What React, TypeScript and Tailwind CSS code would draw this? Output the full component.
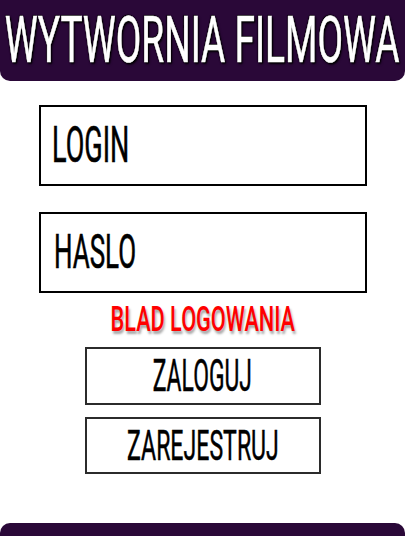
import React from 'react';

const font = "font-['Roboto','Liberation_Sans',Arial,sans-serif]";

const App: React.FC = () => {
  return (
    <div className={`w-[405px] h-[536px] overflow-hidden bg-white flex flex-col items-center ${font}`}>
      {/* Header */}
      <div className="w-full h-[81px] shrink-0 bg-[#2a0838] rounded-b-[10px] flex items-center justify-center">
        <span className="inline-block text-[64px] leading-none font-normal text-white scale-x-[0.58] whitespace-nowrap [-webkit-text-stroke:0.6px_white] [text-shadow:0_0_2px_#000,1px_1px_1px_#000,-1px_-1px_1px_#000,2px_2px_3px_#000]">
          WYTWORNIA FILMOWA
        </span>
      </div>

      {/* Inputs */}
      <div className="mt-[24px] w-[328px] h-[81px] border-2 border-black flex items-center px-[11px]">
        <span className="inline-block origin-left -mt-[2px] text-[50px] leading-none font-normal text-black scale-x-[0.54] [-webkit-text-stroke:0.6px_black]">LOGIN</span>
      </div>
      <div className="mt-[26px] w-[328px] h-[81px] border-2 border-black flex items-center px-[13px]">
        <span className="inline-block origin-left -mt-[2px] text-[49px] leading-none font-normal text-black scale-x-[0.53] [-webkit-text-stroke:0.6px_black]">HASLO</span>
      </div>

      {/* Error */}
      <div className="mt-[15px] h-[23px] flex items-center justify-center">
        <span className="inline-block text-[35px] leading-none font-medium text-[#ff0000] scale-x-[0.62] whitespace-nowrap [text-shadow:2px_3px_3px_rgba(0,0,0,0.35)]">
          BLAD LOGOWANIA
        </span>
      </div>

      {/* Buttons */}
      <button className="mt-[16px] w-[236px] h-[58px] border-2 border-[#2b2b2b] flex items-center justify-center bg-white">
        <span className="inline-block text-[44px] leading-none font-normal text-black scale-x-[0.52] [-webkit-text-stroke:0.5px_black]">ZALOGUJ</span>
      </button>
      <button className="mt-[12px] w-[236px] h-[57px] border-2 border-[#2b2b2b] flex items-center justify-center bg-white">
        <span className="inline-block text-[42px] leading-none font-normal text-black scale-x-[0.55] whitespace-nowrap [-webkit-text-stroke:0.5px_black]">ZAREJESTRUJ</span>
      </button>

      {/* Footer */}
      <div className="mt-auto w-full h-[13px] shrink-0 bg-[#2a0838] rounded-t-[10px]" />
    </div>
  );
};

export default App;
